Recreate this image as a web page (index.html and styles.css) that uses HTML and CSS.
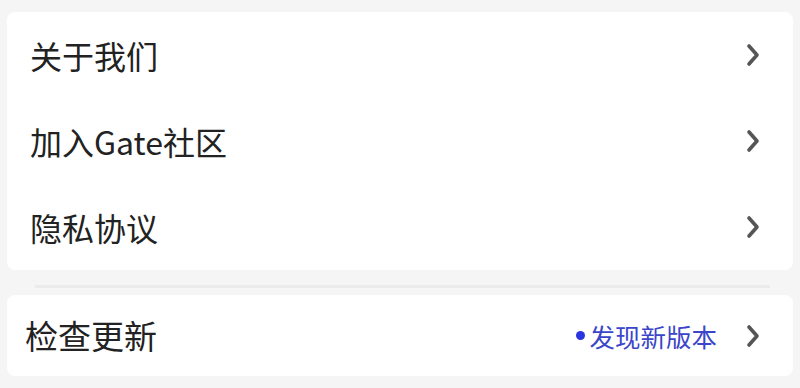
FILE: index.html
```html
<!DOCTYPE html>
<html lang="zh">
<head>
    <meta charset="UTF-8" />
    <meta name="viewport" content="width=device-width, initial-scale=1.0" />
    <title>设置</title>
    <link rel="stylesheet" href="styles.css">
</head>
<body>
<main class="settings">
    <section class="card">
        <div class="row">
            <span class="label">关于我们</span>
            <svg class="chevron" viewBox="0 0 14 24"><path d="M3 3 L11 12 L3 21" /></svg>
        </div>
        <div class="row">
            <span class="label">加入Gate社区</span>
            <svg class="chevron" viewBox="0 0 14 24"><path d="M3 3 L11 12 L3 21" /></svg>
        </div>
        <div class="row">
            <span class="label">隐私协议</span>
            <svg class="chevron" viewBox="0 0 14 24"><path d="M3 3 L11 12 L3 21" /></svg>
        </div>
    </section>

    <div class="divider"></div>

    <section class="card card-update">
        <div class="row">
            <span class="label">检查更新</span>
            <div class="right">
                <span class="dot"></span>
                <span class="badge">发现新版本</span>
                <svg class="chevron" viewBox="0 0 14 24"><path d="M3 3 L11 12 L3 21" /></svg>
            </div>
        </div>
    </section>
</main>
</body>
</html>
```

FILE: styles.css
```css
* {
    box-sizing: border-box;
}
body {
    margin: 0;
    padding: 0;
    background-color: #f5f5f5;
    font-family: "Noto Sans CJK SC", "Noto Sans", sans-serif;
    color: #222222;
}
.settings {
    padding: 12px 7px 0 7px;
    display: flex;
    flex-direction: column;
}
.card {
    background-color: #ffffff;
    border-radius: 8px;
}
.row {
    height: 86px;
    display: flex;
    align-items: center;
    justify-content: space-between;
    padding: 0 33px 0 23px;
}
.label {
    font-size: 32px;
    line-height: 1;
}
.chevron {
    width: 14px;
    height: 24px;
    fill: none;
    stroke: #555555;
    stroke-width: 3.6;
    stroke-linecap: round;
    stroke-linejoin: round;
}
.divider {
    height: 3px;
    margin: 15px 23px 7px 28px;
    background-color: #ebebeb;
}
.card-update .row {
    height: 81px;
    padding-left: 18px;
}
.card-update .label {
    font-size: 33px;
}
.right {
    display: flex;
    align-items: center;
}
.dot {
    width: 9px;
    height: 9px;
    border-radius: 50%;
    background-color: #2a35e0;
    margin-right: 4px;
}
.badge {
    font-size: 25.5px;
    color: #3b45c9;
    margin-right: 29px;
}
```
